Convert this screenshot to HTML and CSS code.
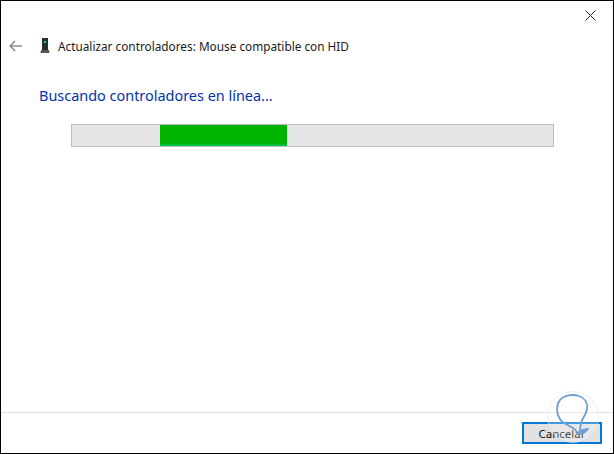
FILE: index.html
```html
<!DOCTYPE html>
<html lang="es">
<head>
<meta charset="utf-8">
<title>Actualizar controladores</title>
<link rel="stylesheet" href="styles.css">
</head>
<body>
<div class="window">
  <div class="close-row">
    <svg class="close" width="11" height="11" viewBox="0 0 11 11"><path d="M0.5 0.5L10.5 10.5M10.5 0.5L0.5 10.5" stroke="#222" stroke-width="1" fill="none"/></svg>
  </div>
  <div class="title-row">
    <svg class="back" width="13" height="12" viewBox="0 0 13 12"><path d="M6 1L1.2 6L6 11M1.2 6H13" stroke="#8c8c8c" stroke-width="1.6" fill="none"/></svg>
    <svg class="device" width="10" height="15" viewBox="0 0 10 15"><path d="M2 0H8V12H2Z" fill="#26302c"/><path d="M1 12H9L9.5 15H0.5Z" fill="#555"/><rect x="4" y="3" width="2" height="2" fill="#14e060"/></svg>
    <span class="title">Actualizar controladores: Mouse compatible con HID</span>
  </div>
  <h1 class="heading">Buscando controladores en línea...</h1>
  <div class="progress"><div class="progress-fill"></div></div>
  <div class="spacer"></div>
  <div class="footer">
    <button class="cancel">Cancelar</button>
    <svg class="mark" width="52" height="54" viewBox="0 0 52 54">
      <circle cx="26" cy="27" r="25.5" fill="#fff" fill-opacity=".25" stroke="#dfe6ee" stroke-opacity=".6"/>
      <path d="M30 42C27 36 16 35 13 29C9 23 9 15 13 10C17 5 26 4 32 6C38 8 41 13 40 19C39 25 35 29 34 33C33.5 36 33 38 33 40" fill="none" stroke="#6f9fd2" stroke-width="1.8"/>
      <path d="M29 44C31 40 37 38 42 38C41 42 35 46 29 44Z" fill="#6f9fd2"/>
    </svg>
  </div>
</div>
</body>
</html>
```
FILE: styles.css
```css
* { box-sizing: border-box; }
html, body { margin: 0; padding: 0; height: 100%; overflow: hidden; background: #fff; }
.window {
  width: 614px;
  height: 454px;
  border: 1px solid #000;
  display: flex;
  flex-direction: column;
  font-family: "Noto Sans", "Open Sans", sans-serif;
  background: #fff;
}
.close-row { display: flex; justify-content: flex-end; padding: 9px 17px 0 0; height: 30px; }
.close { display: block; }
.title-row { display: flex; align-items: center; height: 29px; padding-left: 8px; }
.back { display: block; }
.device { display: block; margin-left: 18px; }
.title { margin-left: 8px; font-size: 11.8px; color: #1a1a1a; white-space: nowrap; }
.heading {
  margin: 26px 0 0 38px;
  font-size: 14.45px;
  font-weight: 400;
  line-height: 20px;
  color: #0033aa;
}
.progress {
  margin: 18px 0 0 70px;
  width: 483px;
  height: 23px;
  background: #e6e6e6;
  border: 1px solid #bcbcbc;
  padding-left: 88px;
}
.progress-fill {
  width: 127px;
  height: 100%;
  background: linear-gradient(to bottom, #00b300 0, #00b300 85%, #06c75a 100%);
}
.spacer { flex: 1; }
.footer {
  position: relative;
  height: 41px;
  border-top: 1px solid #e0e0e0;
  display: flex;
  justify-content: flex-end;
  padding: 9px 11px 0 0;
}
.cancel {
  width: 80px;
  height: 22px;
  border: 2px solid #0078d7;
  background: #e1e1e1;
  font: 11.5px "Noto Sans", sans-serif;
  color: #111;
  padding: 0;
}
.mark { position: absolute; left: 546px; top: -23px; }
```
